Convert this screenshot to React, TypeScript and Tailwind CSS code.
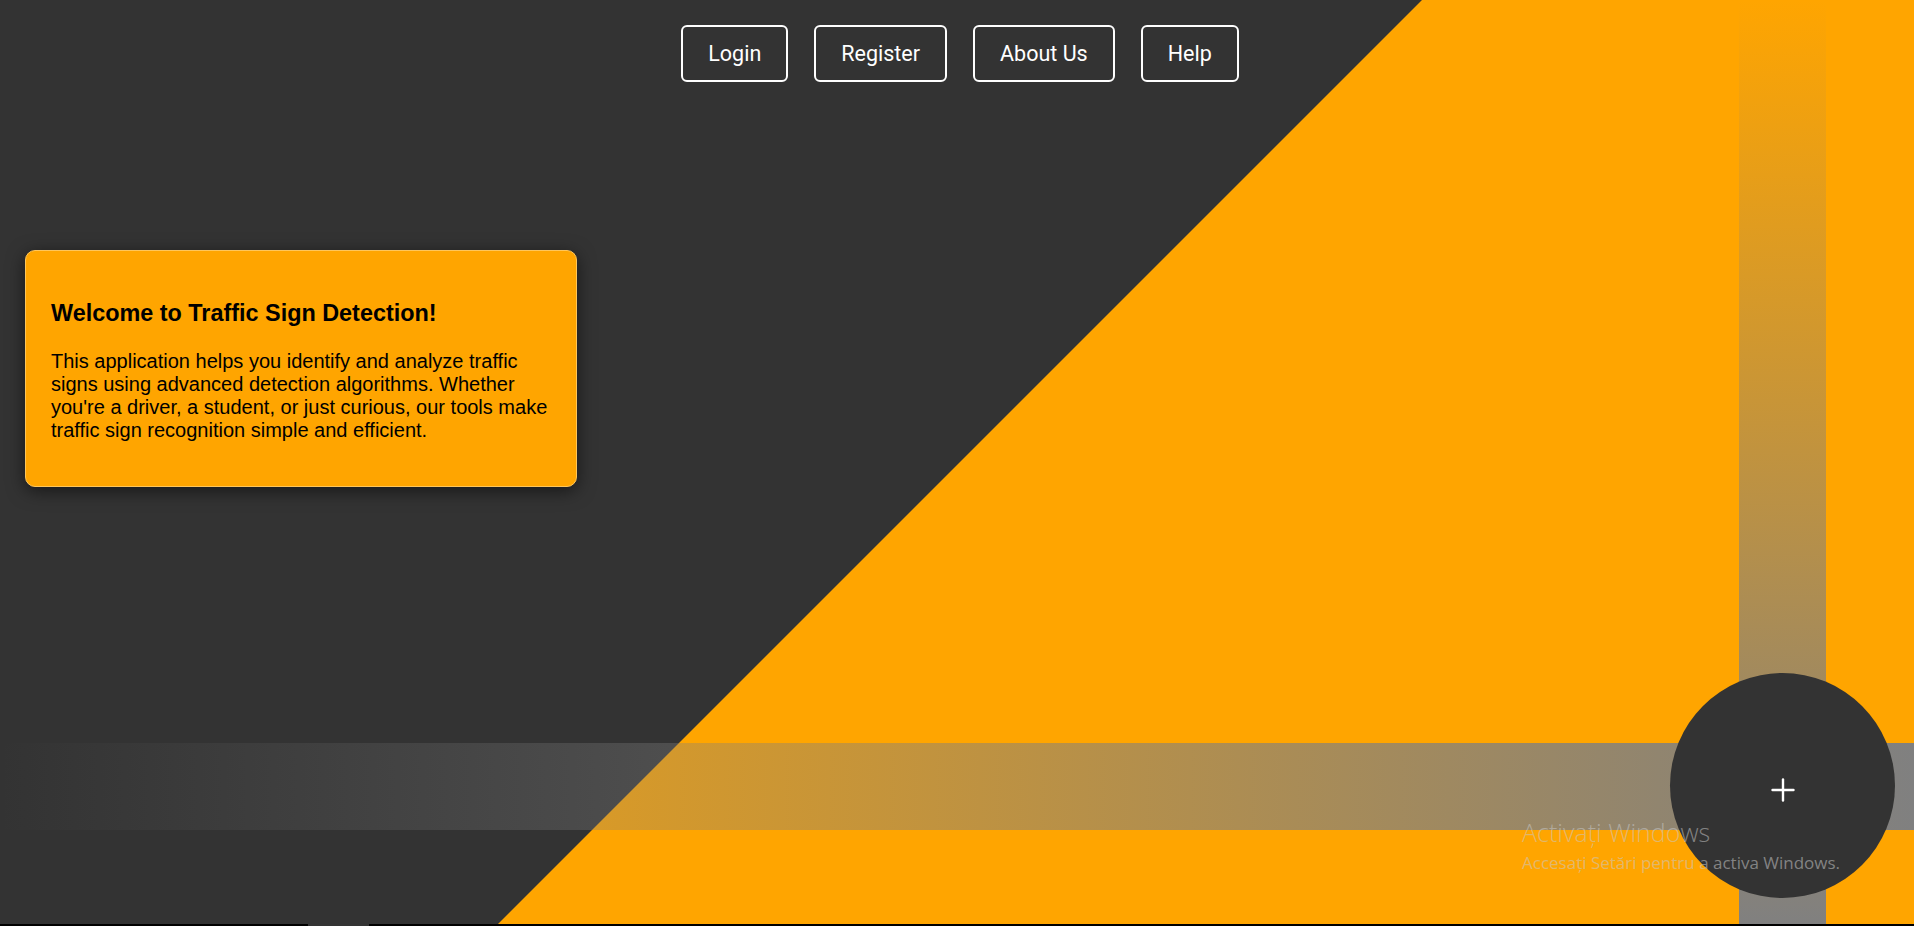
import React from "react"
import { Plus } from "lucide-react"

const navItems = ["Login", "Register", "About Us", "Help"]

const NavBar = () => {
    return (
        <nav className="flex flex-row justify-center gap-[26px] pl-[6px] pt-[25px]">
            {navItems.map((item) => (
                <button
                    key={item}
                    className="rounded-[6px] border-2 border-white bg-transparent px-[25px] py-[13px] text-[21.5px] leading-[27px] text-white font-['Roboto',sans-serif]"
                >
                    {item}
                </button>
            ))}
        </nav>
    )
}

const WelcomeCard = () => {
    return (
        <div className="ml-[25px] mt-[168px] w-[552px] rounded-[10px] border border-[#ffc65a] bg-[#ffa500] px-[25px] py-[25px] text-black shadow-[0_4px_18px_rgba(0,0,0,0.55)] font-['Liberation_Sans',Arial,sans-serif]">
            <h2 className="mt-[24px] text-[23.4px] font-bold leading-[26px]">Welcome to Traffic Sign Detection!</h2>
            <p className="mt-[24px] mb-[19px] text-[20px] leading-[23px]">
                This application helps you identify and analyze traffic signs using advanced detection algorithms. Whether you're a driver, a student, or just curious, our tools make traffic sign recognition simple and efficient.
            </p>
        </div>
    )
}

export default function App() {
    return (
        <div className="relative h-[926px] w-full overflow-hidden bg-[#333333]">
            {/* orange diagonal half */}
            <div className="absolute inset-0 bg-[#ffa500] [clip-path:polygon(1422px_0,100%_0,100%_100%,496px_100%)]"></div>

            {/* light bands */}
            <div className="absolute left-0 right-0 top-[743px] h-[87px] bg-gradient-to-r from-[rgba(128,128,128,0)] to-[rgba(128,128,128,1)]"></div>
            <div className="absolute bottom-0 left-[1739px] top-0 w-[87px] bg-gradient-to-b from-[rgba(128,128,128,0)] to-[rgba(128,128,128,1)]"></div>

            {/* page content */}
            <div className="relative z-10 flex flex-col items-start">
                <div className="w-full">
                    <NavBar />
                </div>
                <WelcomeCard />
            </div>

            {/* round add button */}
            <button className="absolute left-[1670px] top-[673px] z-20 flex h-[225px] w-[225px] items-center justify-center rounded-full bg-[#333333] text-white">
                <Plus size={36} strokeWidth={1.6} className="mt-[9px]" />
            </button>

            {/* windows watermark */}
            <div className="pointer-events-none absolute left-[1522px] top-[817px] z-30 flex flex-col text-[rgba(200,200,200,0.55)] font-['Open_Sans',sans-serif]">
                <span className="text-[25px] font-light leading-[30px]">Activați Windows</span>
                <span className="mt-[5px] text-[17px] leading-[22px]">Accesați Setări pentru a activa Windows.</span>
            </div>

            {/* bottom edge */}
            <div className="absolute bottom-0 left-0 right-0 z-30 h-[2px] bg-black">
                <div className="ml-[308px] h-full w-[61px] bg-[#333333]"></div>
            </div>
        </div>
    )
}
